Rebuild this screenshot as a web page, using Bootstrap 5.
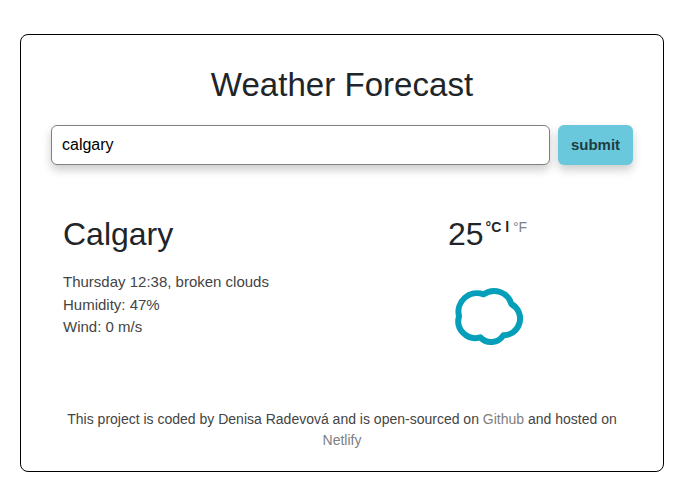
<!DOCTYPE html>
<html lang="en">
<head>
<meta charset="utf-8">
<meta name="viewport" content="width=device-width, initial-scale=1">
<title>Weather Forecast</title>
<link href="https://cdn.jsdelivr.net/npm/bootstrap@5.3.0/dist/css/bootstrap.min.css" rel="stylesheet">
<style>
body { font-family: "Liberation Sans", Arial, sans-serif; background: #fff; }
.weather-app { width: 644px; height: 438px; margin: 34px 0 0 20px; padding: 30px; border: 1px solid #000; border-radius: 8px; }
.app-title { font-size: 33.1px; line-height: 40px; font-weight: 400; color: #212529; }
.city-name { font-size: 32px; line-height: 40px; font-weight: 400; color: #212529; }
.search-form { margin-top: 20px; }
.search-input { height: 40px; padding: 0 10px; border: 1px solid #808080; border-radius: 6px; font-size: 16px; color: #000; box-shadow: 0 5px 10px rgba(0,0,0,.2); }
.search-button, .search-button:hover { width: 75px; height: 40px; padding: 0; border: 0; border-radius: 6px; background: #69c8dc; color: #1f3b42; font-size: 15px; font-weight: 700; box-shadow: 0 5px 10px rgba(0,0,0,.2); }
.weather-now { margin-top: 49px; height: 195px; }
.city-column { width: 385px; padding-left: 12px; }
.details { margin-top: 17px; font-size: 15px; line-height: 22.5px; color: #444; }
.temperature { font-size: 32px; line-height: 40px; color: #212529; }
.units { font-size: 14px; line-height: 16px; margin: 5px 0 0 2px; font-weight: 700; color: #212529; }
.units a, .credits a { color: #808080; text-decoration: none; font-weight: 400; }
.weather-icon { display: block; margin: 21px 0 0 -8px; }
.credits { font-size: 14px; line-height: 21px; color: #444; }
</style>
</head>
<body>
<main class="weather-app">
  <h1 class="app-title text-center mb-0">Weather Forecast</h1>
  <form class="search-form d-flex gap-2">
    <input class="search-input flex-grow-1" type="text" value="calgary" aria-label="City">
    <button class="search-button btn" type="button">submit</button>
  </form>
  <section class="weather-now d-flex">
    <div class="city-column flex-shrink-0">
      <h2 class="city-name mb-0">Calgary</h2>
      <ul class="details list-unstyled mb-0">
        <li>Thursday 12:38, broken clouds</li>
        <li>Humidity: 47%</li>
        <li>Wind: 0 m/s</li>
      </ul>
    </div>
    <div class="ps-2 ms-1">
      <div class="d-flex align-items-start">
        <span class="temperature">25</span>
        <span class="units">°C l <a href="#">°F</a></span>
      </div>
      <svg class="weather-icon" width="100" height="85" viewBox="0 0 300 255" role="img" aria-label="Broken clouds">
        <path d="M131 58A54 54 0 0 1 214 87A50 50 0 0 1 190 181A44 44 0 0 1 121 187A51 51 0 0 1 57 124A56 56 0 0 1 131 58Z" fill="none" stroke="#069fba" stroke-width="18" stroke-linejoin="round"/>
      </svg>
    </div>
  </section>
  <footer class="credits text-center">This project is coded by Denisa Radevová and is open-sourced on <a href="#">Github</a> and hosted on <a href="#">Netlify</a></footer>
</main>
<script src="https://cdn.jsdelivr.net/npm/bootstrap@5.3.0/dist/js/bootstrap.bundle.min.js"></script>
</body>
</html>
